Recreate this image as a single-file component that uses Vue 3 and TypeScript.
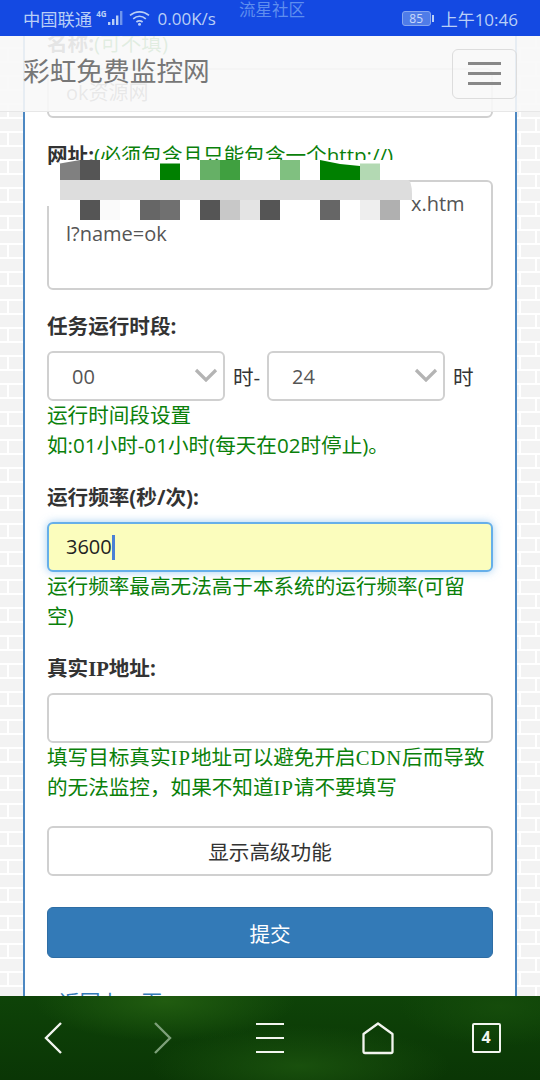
<script setup lang="ts">
interface Cell { col: number; row: number; color: string; shape?: string }
const cells: Cell[] = [
  { col: 1, row: 1, color: '#808080', shape: 'up' },
  { col: 2, row: 1, color: '#555555' },
  { col: 6, row: 1, color: '#008000', shape: 'low' },
  { col: 8, row: 1, color: '#66b066' },
  { col: 9, row: 1, color: '#40a040' },
  { col: 12, row: 1, color: '#80c080' },
  { col: 14, row: 1, color: '#008000', shape: 'down' },
  { col: 15, row: 1, color: '#008000', shape: 'down2' },
  { col: 16, row: 1, color: '#b3d9b3', shape: 'low' },
  { col: 2, row: 3, color: '#555555' },
  { col: 3, row: 3, color: '#fafafa' },
  { col: 5, row: 3, color: '#666666' },
  { col: 6, row: 3, color: '#707070' },
  { col: 8, row: 3, color: '#555555' },
  { col: 9, row: 3, color: '#c8c8c8' },
  { col: 10, row: 3, color: '#e4e4e4' },
  { col: 11, row: 3, color: '#555555' },
  { col: 14, row: 3, color: '#666666' },
  { col: 16, row: 3, color: '#eeeeee' },
  { col: 17, row: 3, color: '#b0b0b0' },
]
const hours = [
  { value: '00', unit: '时-' },
  { value: '24', unit: '时' },
]
</script>

<template>
  <div class="page">
    <main class="panel">
      <div class="label">名称:<span class="note">(可不填)</span></div>
      <div class="field plain">ok资源网</div>

      <div class="label gap-top">网址:<span class="note">(必须包含且只能包含一个http://)</span></div>
      <div class="area">
        <div class="area-line first">x.htm</div>
        <div class="area-line">l?name=ok</div>
      </div>

      <div class="label gap-small">任务运行时段:</div>
      <div class="hours">
        <template v-for="h in hours" :key="h.value">
          <div class="select-wrap">
            <select class="select" :value="h.value">
              <option :value="h.value">{{ h.value }}</option>
            </select>
            <svg class="chevron" width="24" height="14" viewBox="0 0 24 14">
              <path d="M2 2 L12 12 L22 2" fill="none" stroke="#b4b4b4" stroke-width="3.2" />
            </svg>
          </div>
          <span class="unit">{{ h.unit }}</span>
        </template>
      </div>
      <p class="help">运行时间段设置<br />如:01小时-01小时(每天在02时停止)。</p>

      <div class="label gap-top">运行频率(秒/次):</div>
      <div class="field focused">3600<span class="caret"></span></div>
      <p class="help">运行频率最高无法高于本系统的运行频率(可留<br />空)</p>

      <div class="label gap-top">真实<span class="serif">IP</span>地址:</div>
      <div class="field"></div>
      <p class="help">填写目标真实<span class="serif">IP</span>地址可以避免开启<span class="serif">CDN</span>后而导致<br />的无法监控&#xFF0C;如果不知道<span class="serif">IP</span>请不要填写</p>

      <button class="btn btn-default" type="button">显示高级功能</button>
      <button class="btn btn-primary" type="button">提交</button>
      <div class="back">[ <span>返回上一页</span> ]</div>
    </main>

    <div class="mosaic" aria-hidden="true">
      <div
        v-for="c in cells"
        :key="`${c.col}-${c.row}`"
        class="cell"
        :class="c.shape"
        :style="{ gridColumn: c.col, gridRow: c.row, background: c.color }"
      ></div>
      <div class="strip"></div>
    </div>
    <div class="patch" aria-hidden="true"></div>

    <header class="navbar">
      <div class="brand">彩虹免费监控网</div>
      <div class="toggle"><i></i><i></i><i></i></div>
    </header>

    <div class="status">
      <div class="status-left">
        <span class="carrier">中国联通</span>
        <span class="net">4G</span>
        <svg width="18" height="16" viewBox="0 0 18 16">
          <g fill="#b9cff6">
            <rect x="0" y="12" width="2.4" height="3" />
            <rect x="4" y="9" width="2.4" height="6" />
            <rect x="8" y="5.5" width="2.4" height="9.5" />
          </g>
          <rect x="12" y="1" width="2.4" height="14" fill="#6f95ec" />
        </svg>
        <svg class="wifi" width="21" height="16" viewBox="0 0 21 16">
          <g fill="none" stroke="#b9cff6" stroke-width="1.7">
            <path d="M1 5.4 C6.5 .6 14.5 .6 20 5.4" />
            <path d="M4.2 8.8 C8 5.6 13 5.6 16.8 8.8" />
            <path d="M7.4 12 C9.4 10.4 11.6 10.4 13.6 12" />
          </g>
          <circle cx="10.5" cy="14.2" r="1.5" fill="#b9cff6" />
        </svg>
        <span class="speed">0.00K/s</span>
      </div>
      <div class="status-right">
        <span class="battery">85</span>
        <span class="nub"></span>
        <span class="clock">上午10:46</span>
      </div>
      <span class="ghost">流星社区</span>
    </div>

    <nav class="bottom">
      <div class="nav-cell">
        <svg width="32" height="36" viewBox="0 0 32 36">
          <path d="M23 3 L8 18 L23 33" fill="none" stroke="#f2f5ef" stroke-width="2.4" />
        </svg>
      </div>
      <div class="nav-cell">
        <svg width="32" height="36" viewBox="0 0 32 36">
          <path d="M9 3 L24 18 L9 33" fill="none" stroke="#7d9f79" stroke-width="2.4" />
        </svg>
      </div>
      <div class="nav-cell">
        <svg width="32" height="36" viewBox="0 0 32 36">
          <path d="M2 4 H30 M2 18 H30 M2 32 H30" fill="none" stroke="#f2f5ef" stroke-width="2.2" />
        </svg>
      </div>
      <div class="nav-cell">
        <svg width="34" height="36" viewBox="0 0 34 36">
          <path d="M17 3.5 L31.5 14 V31.5 Q31.5 33 30 33 H4 Q2.500 33 2.500 31.5 V14 Z" fill="none" stroke="#f2f5ef" stroke-width="2.300" stroke-linejoin="round" />
        </svg>
      </div>
      <div class="nav-cell">
        <div class="tabs">4</div>
      </div>
    </nav>
  </div>
</template>

<style>
html, body { margin: 0; padding: 0; }
</style>

<style scoped>
.page {
  position: relative;
  width: 540px;
  height: 1080px;
  overflow: hidden;
  font-family: "Open Sans", "Noto Sans CJK SC", sans-serif;
  background-color: #f3f3f3;
  background-image: url("data:image/svg+xml,%3Csvg xmlns='http://www.w3.org/2000/svg' width='32' height='28'%3E%3Cg stroke='%23fff' stroke-width='2' fill='none'%3E%3Cpath d='M0 6H32M0 20H32M8 0V6M24 6V20M8 20V28'/%3E%3C/g%3E%3C/svg%3E");
}
.panel {
  box-sizing: border-box;
  width: 494px;
  height: 1080px;
  margin-left: 23px;
  padding: 28px 22px 0;
  background: #fff;
  border: solid #4d88c2;
  border-width: 0 2px;
}
.label {
  height: 30px;
  line-height: 30px;
  margin-bottom: 10px;
  font-size: 20.6px;
  font-weight: 700;
  color: #333;
  white-space: nowrap;
}
.gap-top { margin-top: 22px; }
.gap-small { margin-top: 21px; }
.note { font-weight: 400; color: #0a800a; }
.serif { font-family: "Liberation Serif", serif; line-height: 1; }
.help .serif { letter-spacing: 1px; }
.field {
  box-sizing: border-box;
  height: 50px;
  padding-left: 17px;
  border: 2px solid #d0d0d0;
  border-radius: 6px;
  background: #fff;
  color: #555;
  font-size: 20px;
  line-height: 46px;
}
.field.focused {
  background: #fbfdbd;
  border-color: #66afe9;
  color: #222;
  box-shadow: 0 0 8px rgba(102, 175, 233, 0.6);
}
.caret {
  display: inline-block;
  width: 3px;
  height: 25px;
  background: #4a80d6;
  vertical-align: -6px;
}
.area {
  box-sizing: border-box;
  height: 110px;
  padding: 7px 17px 0;
  border: 2px solid #d0d0d0;
  border-radius: 6px;
  color: #555;
  font-size: 20px;
  line-height: 30px;
}
.area-line.first { padding-left: 345px; }
.hours {
  display: flex;
  align-items: center;
  height: 50px;
}
.select-wrap {
  position: relative;
  width: 178px;
  height: 50px;
  flex: none;
}
.select {
  box-sizing: border-box;
  width: 100%;
  height: 100%;
  padding: 0 0 0 23px;
  border: 2px solid #d0d0d0;
  border-radius: 6px;
  background: #fff;
  color: #555;
  font: 20px "Open Sans", sans-serif;
  appearance: none;
  outline: none;
}
.chevron {
  position: absolute;
  right: 7px;
  top: 17px;
}
.unit {
  flex: none;
  width: 42px;
  padding-left: 8px;
  box-sizing: border-box;
  color: #333;
  font-size: 20.6px;
  white-space: nowrap;
}
.help {
  margin: -1px 0 0;
  color: #0a800a;
  font-size: 20.6px;
  line-height: 30px;
  white-space: nowrap;
}
.btn {
  display: block;
  box-sizing: border-box;
  width: 100%;
  height: 50px;
  border-radius: 6px;
  font: 20.6px "Noto Sans CJK SC", sans-serif;
}
.btn-default {
  margin-top: 24px;
  border: 2px solid #d0d0d0;
  background: #fff;
  color: #333;
}
.btn-primary {
  height: 51px;
  margin-top: 31px;
  border: 1px solid #2e6da4;
  background: #337ab7;
  color: #fff;
}
.back {
  margin-top: 29px;
  color: #333;
  font-size: 20.6px;
  line-height: 30px;
}
.back span { color: #337ab7; }

.mosaic {
  position: absolute;
  left: 60px;
  top: 160px;
  display: grid;
  grid-template-columns: repeat(17, 20px);
  grid-template-rows: 20px 20px 20px;
  background: #fff;
}
.cell { min-height: 0; }
.up { clip-path: polygon(0 18%, 100% 0, 100% 100%, 0 100%); }
.low { clip-path: polygon(0 18%, 100% 18%, 100% 100%, 0 100%); }
.down { clip-path: polygon(0 0, 100% 20%, 100% 100%, 0 100%); }
.down2 { clip-path: polygon(0 20%, 100% 30%, 100% 100%, 0 100%); }
.strip {
  grid-column: 1 / span 17;
  grid-row: 2;
  width: 352px;
  background: #dddddd;
  border-top-right-radius: 4px 14px;
  z-index: 1;
}
.patch {
  position: absolute;
  left: 46px;
  top: 178px;
  width: 14px;
  height: 28px;
  background: #fff;
}

.navbar {
  position: absolute;
  left: 0;
  top: 36px;
  right: 0;
  height: 76px;
  box-sizing: border-box;
  display: flex;
  align-items: center;
  justify-content: space-between;
  padding: 0 23px;
  background: rgba(248, 248, 248, 0.9);
  border-bottom: 1px solid #e7e7e7;
}
.brand {
  margin-bottom: 8px;
  color: #777;
  font-size: 26.7px;
  font-family: "Noto Sans CJK SC", sans-serif;
}
.toggle {
  box-sizing: border-box;
  width: 65px;
  height: 50px;
  display: flex;
  flex-direction: column;
  justify-content: center;
  align-items: center;
  gap: 7px;
  border: 1px solid #ddd;
  border-radius: 6px;
}
.toggle i {
  display: block;
  width: 33px;
  height: 3px;
  background: #888;
}

.status {
  position: absolute;
  left: 0;
  top: 0;
  right: 0;
  height: 36px;
  box-sizing: border-box;
  display: flex;
  align-items: center;
  justify-content: space-between;
  padding: 0 22px 0 23px;
  background: #1449e2;
  color: #b9cff6;
  overflow: hidden;
}
.status-left, .status-right {
  display: flex;
  align-items: center;
}
.carrier { font-size: 17.3px; }
.net {
  font-size: 8px;
  font-weight: 700;
  margin: -10px 1px 0 4px;
}
.wifi { margin-left: 3px; }
.speed {
  margin-left: 8px;
  font-size: 17px;
}
.battery {
  box-sizing: border-box;
  width: 29px;
  height: 15px;
  border: 1px solid #86a6ef;
  border-radius: 3px;
  background: #4f7ce8;
  color: #c8d9fa;
  font-size: 12px;
  line-height: 13px;
  text-align: center;
}
.nub {
  width: 2px;
  height: 7px;
  margin: 0 7px 0 1px;
  background: #b9cff6;
}
.clock { font-size: 17px; }
.ghost {
  position: absolute;
  left: 239px;
  top: -3px;
  font-size: 16.5px;
  color: #5f8eee;
}

.bottom {
  position: absolute;
  left: 0;
  right: 0;
  bottom: 0;
  height: 84px;
  display: flex;
  background:
    radial-gradient(ellipse 130px 40px at 165px 5px, #215c10 0%, rgba(33, 92, 16, 0) 100%),
    radial-gradient(ellipse 150px 40px at 300px 70px, #19500d 0%, rgba(25, 80, 13, 0) 100%),
    radial-gradient(ellipse 100px 40px at 500px 10px, #154c0b 0%, rgba(21, 76, 11, 0) 100%),
    linear-gradient(#0e4308, #0a3605);
}
.nav-cell {
  flex: 1;
  display: flex;
  align-items: center;
  justify-content: center;
}
.nav-cell svg { display: block; }
.tabs {
  box-sizing: border-box;
  width: 29px;
  height: 30px;
  border: 2.5px solid #f2f5ef;
  border-radius: 2px;
  color: #f2f5ef;
  font-size: 16px;
  font-weight: 700;
  line-height: 25px;
  text-align: center;
}
</style>
